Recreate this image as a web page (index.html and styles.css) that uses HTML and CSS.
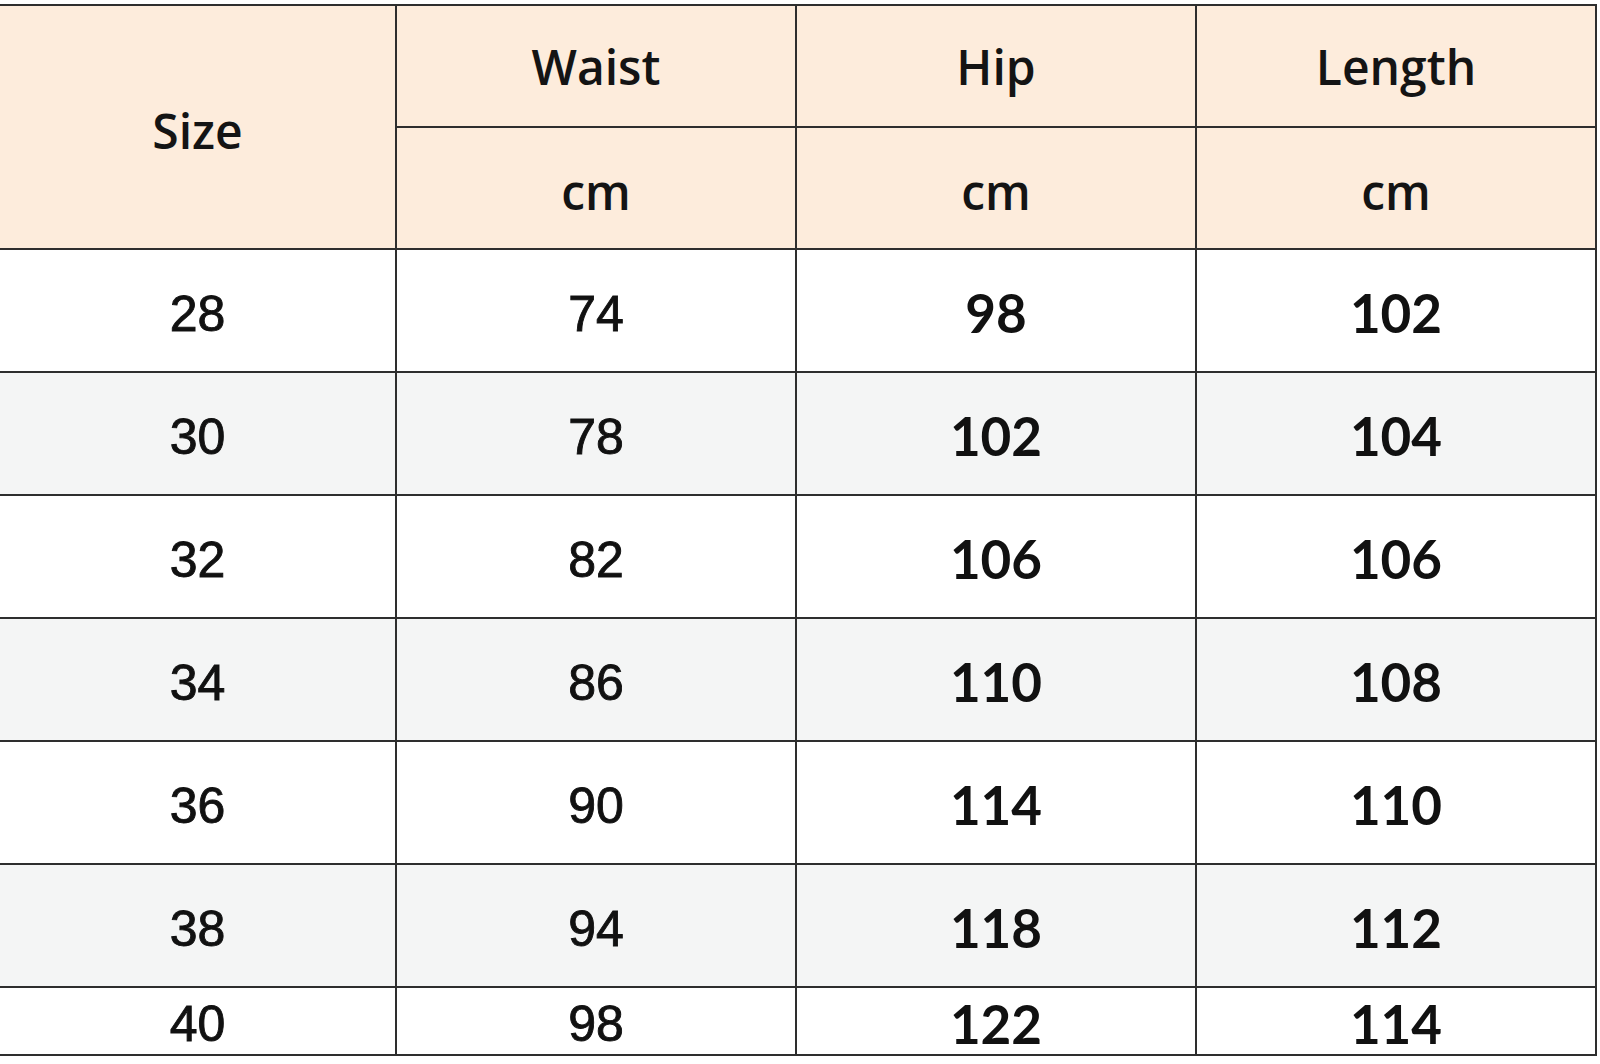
FILE: index.html
```html
<!DOCTYPE html>
<html lang="en">
<head>
<meta charset="utf-8">
<title>Size Chart</title>
<link rel="stylesheet" href="styles.css">
</head>
<body>
<div class="chart">
  <div class="cell head size">Size</div>
  <div class="cell head">Waist</div>
  <div class="cell head">Hip</div>
  <div class="cell head">Length</div>
  <div class="cell head unit">cm</div>
  <div class="cell head unit">cm</div>
  <div class="cell head unit">cm</div>

  <div class="cell a">28</div><div class="cell a">74</div><div class="cell b">98</div><div class="cell b">102</div>
  <div class="cell a g">30</div><div class="cell a g">78</div><div class="cell b g">102</div><div class="cell b g">104</div>
  <div class="cell a">32</div><div class="cell a">82</div><div class="cell b">106</div><div class="cell b">106</div>
  <div class="cell a g">34</div><div class="cell a g">86</div><div class="cell b g">110</div><div class="cell b g">108</div>
  <div class="cell a">36</div><div class="cell a">90</div><div class="cell b">114</div><div class="cell b">110</div>
  <div class="cell a g">38</div><div class="cell a g">94</div><div class="cell b g">118</div><div class="cell b g">112</div>
  <div class="cell a">40</div><div class="cell a">98</div><div class="cell b">122</div><div class="cell b">114</div>
</div>
</body>
</html>
```

FILE: styles.css
```css
html, body {
  margin: 0;
  padding: 0;
  background: #ffffff;
}

body {
  padding-top: 4px;
}

.chart {
  display: grid;
  grid-template-columns: 395px 398px 398px 398px;
  grid-template-rows: 120px 120px 121px 121px 121px 121px 121px 121px 66px;
  gap: 2px;
  padding: 2px 2px 2px 0;
  width: max-content;
  background: #2e2e2e;
}

.cell {
  display: flex;
  align-items: center;
  justify-content: center;
  background: #ffffff;
  color: #111111;
}

.cell.g {
  background: #f4f5f5;
}

.head {
  background: #fdecdc;
  font-family: "Open Sans", "Liberation Sans", sans-serif;
  font-weight: 600;
  font-size: 48px;
  color: #141414;
}

.head.size {
  grid-row: span 2;
  padding-top: 6px;
}

.head.unit {
  padding-top: 6px;
}

.a {
  font-family: "Liberation Sans", Arial, sans-serif;
  font-size: 50px;
  padding-top: 6px;
  -webkit-text-stroke: 0.9px #111111;
}

.b {
  font-family: Lato, "Liberation Sans", sans-serif;
  font-weight: 700;
  font-size: 53px;
  padding-top: 4px;
}
```
